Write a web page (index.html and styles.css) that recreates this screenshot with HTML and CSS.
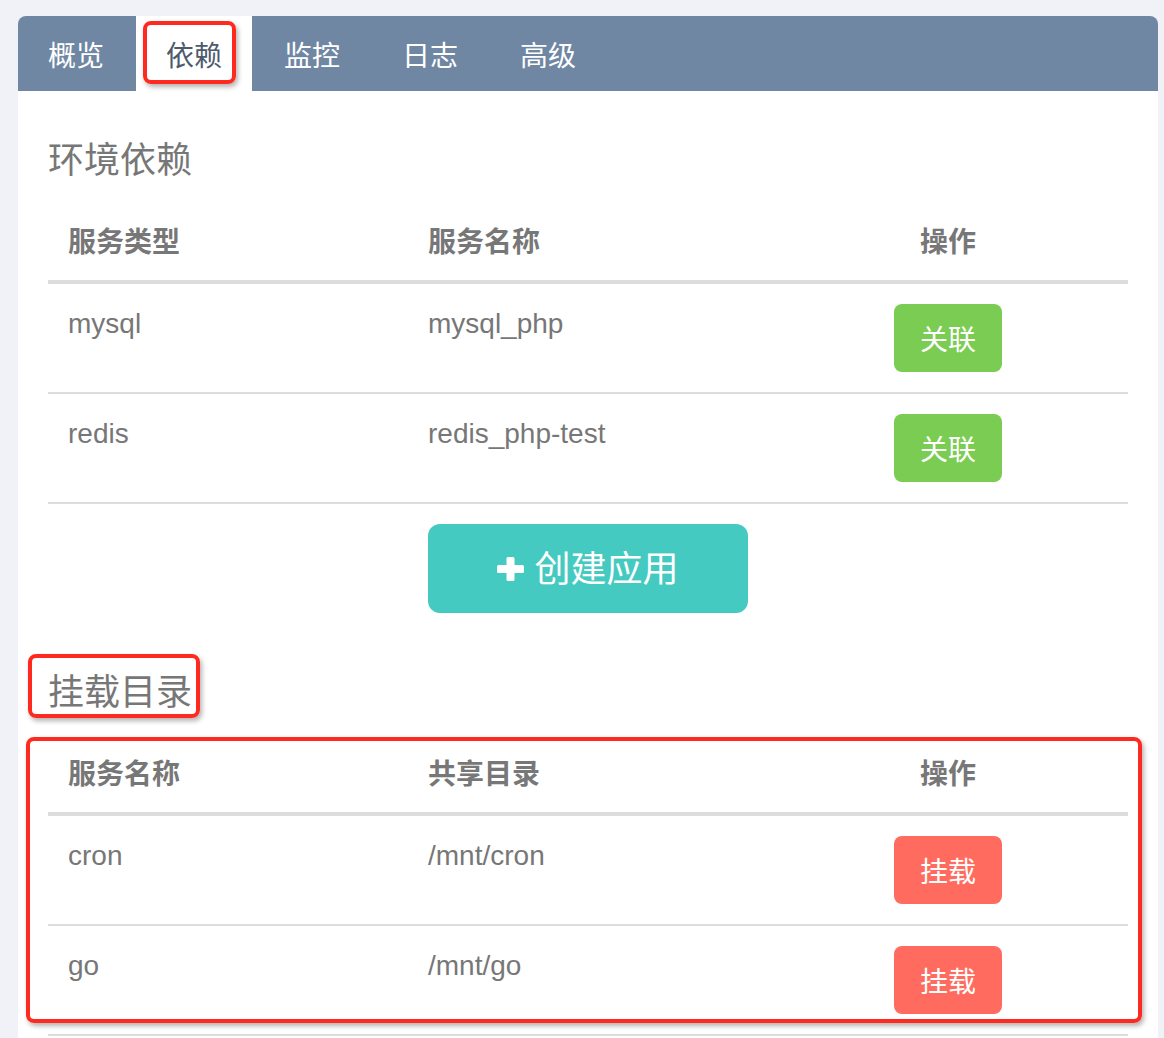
FILE: index.html
```html
<!DOCTYPE html>
<html lang="zh-CN">
<head>
<meta charset="utf-8">
<title>依赖</title>
<link rel="stylesheet" href="styles.css">
</head>
<body>
<div class="page">
  <div class="card">
    <nav class="tabs">
      <div class="tab">概览</div>
      <div class="tab active">依赖<span class="mark mark-tab"></span></div>
      <div class="tab">监控</div>
      <div class="tab">日志</div>
      <div class="tab">高级</div>
    </nav>
    <div class="content">
      <h2 class="section-title">环境依赖</h2>
      <table class="grid">
        <thead>
          <tr><th>服务类型</th><th>服务名称</th><th class="op">操作</th></tr>
        </thead>
        <tbody>
          <tr><td>mysql</td><td>mysql_php</td><td class="op"><span class="btn btn-green">关联</span></td></tr>
          <tr><td>redis</td><td>redis_php-test</td><td class="op"><span class="btn btn-green">关联</span></td></tr>
        </tbody>
      </table>
      <div class="create">
        <svg class="plus" width="27" height="24" viewBox="0 0 27 24"><rect x="9.5" y="0" width="8" height="24" rx="1.5" fill="#fff"/><rect x="0" y="8" width="27" height="8" rx="1.5" fill="#fff"/></svg>
        <span>创建应用</span>
      </div>
      <h2 class="section-title marked">挂载目录<span class="mark mark-title"></span></h2>
      <div class="mount-wrap">
        <span class="mark mark-table"></span>
        <table class="grid">
          <thead>
            <tr><th>服务名称</th><th>共享目录</th><th class="op">操作</th></tr>
          </thead>
          <tbody>
            <tr><td>cron</td><td>/mnt/cron</td><td class="op"><span class="btn btn-red">挂载</span></td></tr>
            <tr><td>go</td><td>/mnt/go</td><td class="op"><span class="btn btn-red">挂载</span></td></tr>
          </tbody>
        </table>
      </div>
    </div>
  </div>
</div>
</body>
</html>
```

FILE: styles.css
```css
html, body {
  margin: 0;
  padding: 0;
}
body {
  background: #f0f2f7;
  font-family: "Liberation Sans", "Noto Sans CJK SC", sans-serif;
  color: #777;
  overflow: hidden;
}
.page {
  padding: 16px 6px 0 18px;
}
.card {
  background: #fff;
  border-radius: 8px 8px 0 0;
  min-height: 1100px;
}
.tabs {
  display: flex;
  height: 75px;
  background: #6f87a3;
  border-radius: 8px 8px 0 0;
}
.tab {
  position: relative;
  width: 116px;
  margin-right: 2px;
  display: flex;
  align-items: center;
  justify-content: center;
  font-family: "Noto Sans CJK SC", sans-serif;
  font-size: 28px;
  color: #fff;
}
.tab.active {
  background: #fff;
  color: #4c5a6c;
}
.mark {
  position: absolute;
  box-sizing: border-box;
  border: 4px solid #ff2a1f;
  border-radius: 8px;
  box-shadow: 2px 3px 5px rgba(0, 0, 0, 0.3);
  pointer-events: none;
}
.mark-tab {
  left: 7px;
  top: 5px;
  width: 93px;
  height: 63px;
}
.content {
  padding: 46px 30px 0 30px;
}
.section-title {
  position: relative;
  margin: 0 0 23px 0;
  font-family: "Noto Sans CJK SC", sans-serif;
  font-size: 36px;
  line-height: 40px;
  font-weight: normal;
  color: #777;
}
.mark-title {
  left: -20px;
  top: -15px;
  width: 172px;
  height: 64px;
}
.grid {
  width: 100%;
  border-collapse: collapse;
  table-layout: fixed;
}
.grid th,
.grid td {
  padding: 20px;
  font-size: 28px;
  line-height: 40px;
  vertical-align: top;
  text-align: left;
  color: #777;
}
.grid th {
  font-family: "Noto Sans CJK SC", sans-serif;
  font-weight: bold;
  font-size: 28px;
  border-bottom: 4px solid #ddd;
}
.grid td {
  border-bottom: 2px solid #ddd;
}
.grid .op {
  text-align: center;
}
.btn {
  display: block;
  width: 108px;
  height: 68px;
  margin: 0 auto;
  border-radius: 8px;
  color: #fff;
  font-family: "Noto Sans CJK SC", sans-serif;
  font-size: 28px;
  line-height: 68px;
  text-align: center;
}
.btn-green {
  background: #7bcc52;
}
.btn-red {
  background: #ff6c5f;
}
.create {
  box-sizing: border-box;
  display: flex;
  align-items: center;
  justify-content: center;
  gap: 10px;
  width: 320px;
  height: 89px;
  padding-bottom: 6px;
  margin: 20px auto 56px auto;
  background: #44cac0;
  border-radius: 12px;
  color: #fff;
  font-family: "Noto Sans CJK SC", sans-serif;
  font-size: 36px;
}
.plus {
  display: block;
  margin-top: 6px;
}
.mount-wrap {
  position: relative;
}
.mark-table {
  left: -22px;
  top: 5px;
  width: 1116px;
  height: 286px;
}
```
